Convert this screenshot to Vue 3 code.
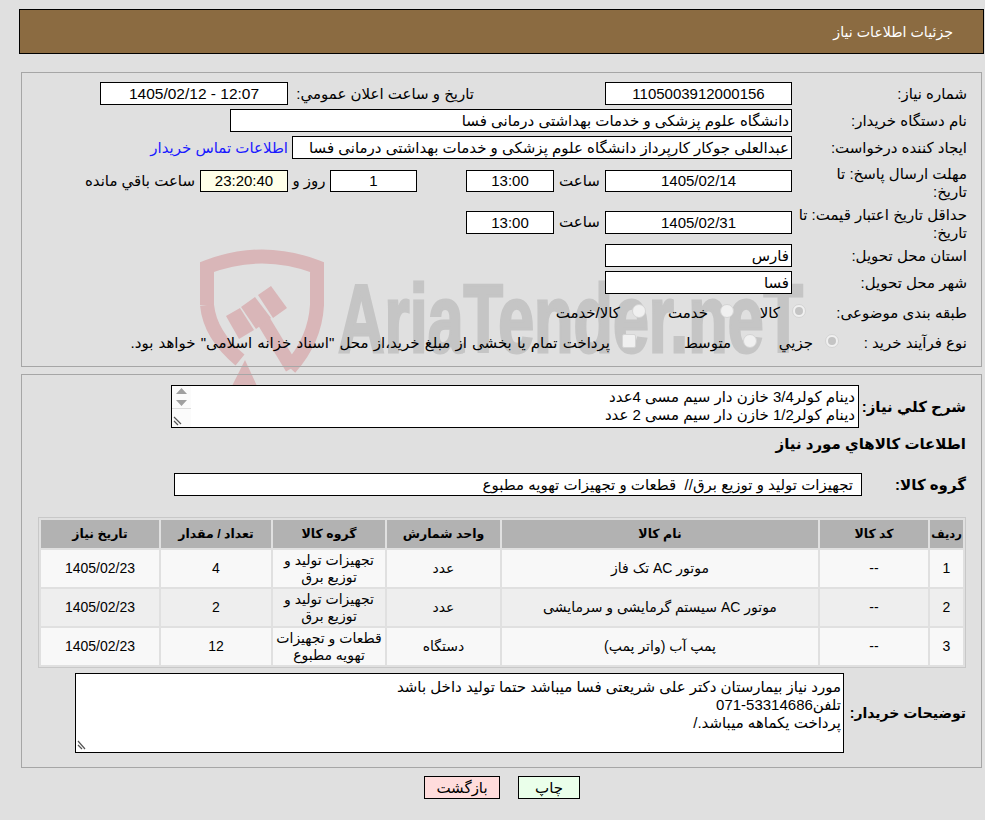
<script setup>
const rows = [
  { n: 1, code: '--', name: 'موتور AC تک فاز', unit: 'عدد', group: 'تجهیزات تولید و توزیع برق', qty: '4', date: '1405/02/23' },
  { n: 2, code: '--', name: 'موتور AC سیستم گرمایشی و سرمایشی', unit: 'عدد', group: 'تجهیزات تولید و توزیع برق', qty: '2', date: '1405/02/23' },
  { n: 3, code: '--', name: 'پمپ آب (واتر پمپ)', unit: 'دستگاه', group: 'قطعات و تجهیزات تهویه مطبوع', qty: '12', date: '1405/02/23' },
]
</script>

<template>
  <div class="page" dir="rtl">
    <svg class="mark" viewBox="0 0 985 820" aria-hidden="true">
      <g fill="none" stroke="#d9b6b8" stroke-width="14">
        <path d="M207 305 V267 Q262 246 317 267 V305 Q315 340 290 368"/>
        <path d="M207 305 Q210 335 240 360"/>
        <path d="M263 320 L292 368"/>
      </g>
      <g fill="#d9b6b8">
        <path d="M226 316 L240 308 L254 330 L239 339 Z"/>
        <path d="M241 307 L255 297 L271 318 L256 329 Z"/>
        <path d="M258 295 L271 286 L287 308 L273 318 Z"/>
        <path d="M245 360 L232 386 L257 386 Z"/>
      </g>
      <text x="338" y="352" class="mark-text" textLength="465" lengthAdjust="spacingAndGlyphs">AriaTender.neT</text>
    </svg>

    <header class="title">جزئیات اطلاعات نیاز</header>

    <section class="panel info">
      <div class="row r1">
        <label class="lab">شماره نیاز:</label>
        <div class="box w187 ctr">1105003912000156</div>
        <label class="gap-a">تاریخ و ساعت اعلان عمومي:</label>
        <div class="box w188 ctr wide">12:07 - 1405/02/12</div>
      </div>
      <div class="row r2">
        <label class="lab">نام دستگاه خریدار:</label>
        <div class="box w562 txt">دانشگاه علوم پزشکی و خدمات بهداشتی درمانی فسا</div>
      </div>
      <div class="row r3">
        <label class="lab">ایجاد کننده درخواست:</label>
        <div class="box w500 txt">عبدالعلی جوکار کارپرداز دانشگاه علوم پزشکی و خدمات بهداشتی درمانی فسا</div>
        <a class="link">اطلاعات تماس خریدار</a>
      </div>
      <div class="row r4">
        <label class="lab tall">مهلت ارسال پاسخ: تا<br />تاریخ:</label>
        <div class="box w187 ctr h22">1405/02/14</div>
        <span class="unit">ساعت</span>
        <div class="box w88 ctr h22">13:00</div>
        <div class="box w88 ctr h22 day">1</div>
        <span class="roz">روز و</span>
        <div class="box w88 ctr h22 clock">23:20:40</div>
        <span class="left-t">ساعت باقي مانده</span>
      </div>
      <div class="row r5">
        <label class="lab tall">حداقل تاریخ اعتبار قیمت: تا<br />تاریخ:</label>
        <div class="box w187 ctr">1405/02/31</div>
        <span class="unit">ساعت</span>
        <div class="box w88 ctr">13:00</div>
      </div>
      <div class="row r6">
        <label class="lab">استان محل تحویل:</label>
        <div class="box w187 txt">فارس</div>
      </div>
      <div class="row r7">
        <label class="lab">شهر محل تحویل:</label>
        <div class="box w187 txt">فسا</div>
      </div>
      <div class="row r8">
        <label class="lab">طبقه بندی موضوعی:</label>
        <span class="radio on"></span><span class="opt o1">کالا</span>
        <span class="radio"></span><span class="opt o2">خدمت</span>
        <span class="radio"></span><span class="opt">کالا/خدمت</span>
      </div>
      <div class="row r9">
        <label class="lab">نوع فرآیند خرید :</label>
        <span class="radio on"></span><span class="opt o3">جزیي</span>
        <span class="radio"></span><span class="opt o4">متوسط</span>
        <span class="check"></span>
        <span class="opt pay">پرداخت تمام یا بخشی از مبلغ خرید،از محل "اسناد خزانه اسلامی" خواهد بود.</span>
      </div>
    </section>

    <section class="panel detail">
      <div class="row d1">
        <label class="blab">شرح کلي نیاز:</label>
        <div class="area a1">
          <div>دینام کولر3/4 خازن دار سیم مسی 4عدد</div>
          <div>دینام کولر1/2 خازن دار سیم مسی 2 عدد</div>
          <div class="scroller">
            <svg width="19" height="41" viewBox="0 0 19 41">
              <path d="M4 8 L9.500 2 L15 8 Z M4 14 H15 L9.500 20 Z" fill="#a0a0a0"/>
              <path d="M0 22.500 H19" stroke="#dcdcdc"/>
              <path d="M2 31 L9 38 M2 35 L6 39" stroke="#555" stroke-width="1.200"/>
            </svg>
          </div>
        </div>
      </div>
      <h3 class="heading">اطلاعات کالاهاي مورد نیاز</h3>
      <div class="row d2">
        <label class="blab group-l">گروه کالا:</label>
        <div class="box group-v">تجهیزات تولید و توزیع برق//&nbsp; قطعات و تجهیزات تهویه مطبوع</div>
      </div>

      <div class="tbl-wrap">
        <table class="tbl">
          <colgroup>
            <col class="c1" /><col class="c2" /><col class="c3" /><col class="c4" /><col class="c5" /><col class="c6" /><col class="c7" />
          </colgroup>
          <thead>
            <tr>
              <th class="th-n">ردیف</th><th>کد کالا</th><th>نام کالا</th><th>واحد شمارش</th><th>گروه کالا</th><th>تعداد / مقدار</th><th>تاریخ نیاز</th>
            </tr>
          </thead>
          <tbody>
            <tr v-for="r in rows" :key="r.n">
              <td>{{ r.n }}</td><td>{{ r.code }}</td><td>{{ r.name }}</td><td>{{ r.unit }}</td>
              <td class="grp">{{ r.group }}</td><td>{{ r.qty }}</td><td>{{ r.date }}</td>
            </tr>
          </tbody>
        </table>
      </div>

      <div class="row d3">
        <label class="blab note-l">توضیحات خریدار:</label>
        <div class="area a2">
          <div>مورد نیاز بیمارستان دکتر علی شریعتی فسا میباشد حتما تولید داخل باشد</div>
          <div>تلفن53314686-071</div>
          <div>پرداخت یکماهه میباشد./</div>
          <svg class="grip" width="12" height="12" viewBox="0 0 12 12">
            <path d="M1 2 L8 10 M1 6 L5 10" stroke="#555" stroke-width="1.200"/>
          </svg>
        </div>
      </div>
    </section>

    <div class="actions">
      <button class="btn print">چاپ</button>
      <button class="btn back">بازگشت</button>
    </div>
  </div>
</template>

<style>
html, body { margin: 0; background: #e0e0e0; }
</style>

<style scoped>
.page {
  position: relative; z-index: 0;
  width: 985px; height: 820px; box-sizing: border-box; overflow: hidden;
  padding: 9px 1px 0 3px; background: #e0e0e0; color: #000;
  font: 15px/18px "Liberation Sans", "DejaVu Sans", sans-serif;
}
.mark { position: absolute; left: 0; top: 0; width: 985px; height: 820px; z-index: -1; direction: ltr; }
.mark-text { font: 700 96px "Liberation Sans Narrow", "Liberation Sans", sans-serif; fill: #c5c5c5; stroke: #c5c5c5; stroke-width: 3px; direction: ltr; }
.title {
  height: 43px; margin-left: 16px; border: 1px solid #000; background: #8b6b41;
  color: #fff; display: flex; align-items: center; padding-right: 30px; font-size: 14.200px;
}
.panel { border: 1px solid #a6a6a6; margin-right: 2px; margin-left: 18px; box-sizing: border-box; }
.info { margin-top: 18px; height: 295px; }
.detail { margin-top: 7px; height: 394px; }
.row { display: flex; align-items: center; }
.lab { width: 189px; padding-right: 14px; box-sizing: border-box; flex: none; white-space: nowrap; }
.lab.tall { padding-top: 4px; }
.box { background: #fff; border: 1px solid #000; height: 21px; line-height: 21px; flex: none; white-space: pre; overflow: hidden; }
.ctr { text-align: center; }
.wide { font-size: 15.500px; }
.txt { text-align: right; padding-right: 2px; }
.w187 { width: 185px; }
.w187.txt { width: 183px; }
.w188 { width: 186px; }
.w562 { width: 558px; }
.w500 { width: 496px; }
.w88 { width: 86px; }
.h22 { height: 20px; line-height: 20px; }
.r1 { margin-top: 9px; }
.r2 { margin-top: 4px; }
.r3 { margin-top: 4px; }
.r4 { margin-top: 3px; height: 38px; }
.r5 { margin-top: 3px; height: 38px; }
.r6 { margin-top: 3px; }
.r7 { margin-top: 4px; }
.r8 { margin-top: 9px; height: 20px; }
.r8 .lab { width: 175px; }
.r9 { margin-top: 10px; height: 20px; }
.r9 .lab { width: 142px; }
.gap-a { width: 317px; padding-right: 131px; box-sizing: border-box; flex: none; white-space: nowrap; }
.link { color: #1a1aff; margin-right: 4px; white-space: nowrap; }
.unit { width: 51px; text-align: center; flex: none; }
.day { margin-right: 49px; width: 85px; }
.roz { width: 42px; text-align: center; flex: none; }
.clock { background: #ffffe8; }
.left-t { margin-right: 5px; white-space: nowrap; }
.radio {
  width: 14px; height: 14px; box-sizing: border-box; border-radius: 50%; flex: none; position: relative;
  background: #f0f0f0; border: 1px solid #d4d4d4; margin: -4px 0 0 12px;
}
.radio.on::after { content: ""; position: absolute; inset: 2px; border-radius: 50%; background: #c4c4c4; }
.check { width: 14px; height: 14px; box-sizing: border-box; background: #f0f0f0; border: 1px solid #d4d4d4; border-radius: 2px; flex: none; margin: -4px 0 0 12px; }
.opt { flex: none; white-space: nowrap; }
.o1 { width: 46px; }
.o2 { width: 62px; }
.o3 { width: 56px; }
.o4 { width: 95px; }
.pay { word-spacing: 1px; }
.blab { font-weight: 700; flex: none; white-space: nowrap; }
.d1 { margin-top: 10px; padding-right: 15px; }
.d1 .blab { width: 107px; }
.area { position: relative; background: #fff; border: 1px solid #000; flex: none; box-sizing: border-box; overflow: hidden; }
.a1 { width: 688px; height: 43px; padding: 2px 3px 0; line-height: 18px; }
.a2 { width: 769px; height: 80px; padding: 4px 2px; line-height: 18px; }
.scroller { position: absolute; left: 0; top: 0; width: 19px; height: 41px; background: #fbfbfb; }
.scroller svg { display: block; }
.grip { position: absolute; left: 1px; bottom: 1px; }
.heading { font: 700 15px/18px "Liberation Sans", "DejaVu Sans", sans-serif; margin: 7px 15px 0 0; }
.d2 { margin-top: 20px; padding-right: 15px; }
.group-l { width: 104px; }
.group-v { width: 678px; padding-right: 8px; }
.tbl-wrap { margin: 21px 15px 0 16px; border: 1px solid #c8c8c8; }
.tbl { width: 100%; border-collapse: separate; border-spacing: 2px; table-layout: fixed; }
.c1 { width: 33px; } .c2 { width: 108px; } .c3 { width: 316px; } .c4 { width: 113px; } .c5 { width: 112px; } .c6 { width: 110px; }
.tbl th { background: #b2b2b2; height: 28px; padding: 0; font-size: 12.500px; font-weight: 700; white-space: nowrap; }
.tbl th.th-n { font-size: 11.500px; }
.tbl td { background: #f8f8f8; height: 37px; padding: 0 4px; text-align: center; font-size: 14px; line-height: 17px; }
.tbl tbody tr:nth-child(2) td { background: #eeeeee; }
.tbl td.grp { padding: 0 2px; }
.d3 { margin-top: 5px; padding-right: 15px; }
.note-l { width: 122px; font-size: 14px; }
.actions { display: flex; justify-content: center; gap: 18px; margin-top: 8px; padding-left: 17px; }
.btn { height: 23px; border: 1px solid #000; font: 15px "Liberation Sans", "DejaVu Sans", sans-serif; padding: 0; color: #000; }
.print { width: 62px; background: #eaffea; }
.back { width: 76px; background: #ffdcdc; }
</style>
